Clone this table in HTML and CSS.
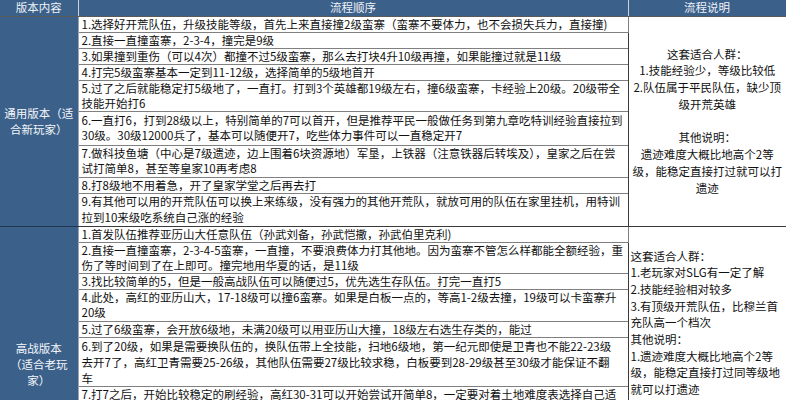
FILE: index.html
```html
<!DOCTYPE html>
<html lang="zh-CN">
<head>
<meta charset="utf-8">
<title>流程表</title>
<link rel="stylesheet" href="styles.css">
</head>
<body>
<table class="sheet">
  <colgroup>
    <col class="c-ver">
    <col class="c-mid">
    <col class="c-note">
  </colgroup>
  <thead>
    <tr class="head">
      <th>版本内容</th>
      <th>流程顺序</th>
      <th>流程说明</th>
    </tr>
  </thead>
  <tbody>
    <tr class="l1 h16">
      <td class="ver ver1" rowspan="9">通用版本（适<br>合新玩家）</td>
      <td class="mid">1.选择好开荒队伍，升级技能等级，首先上来直接撞2级蛮寨（蛮寨不要体力，也不会损失兵力，直接撞)</td>
      <td class="note note1" rowspan="9">这套适合人群：<br>1.技能经验少，等级比较低<br>2.队伍属于平民队伍，缺少顶<br>级开荒英雄<br>&nbsp;<br>其他说明：<br>遗迹难度大概比地高个2等<br>级，能稳定直接打过就可以打<br>遗迹</td>
    </tr>
    <tr class="l1 h16"><td class="mid">2.直接一直撞蛮寨，2-3-4，撞完是9级</td></tr>
    <tr class="l1 h16"><td class="mid">3.如果撞到重伤（可以4次）都撞不过5级蛮寨，那么去打块4升10级再撞，如果能撞过就是11级</td></tr>
    <tr class="l1 h16"><td class="mid">4.打完5级蛮寨基本一定到11-12级，选择简单的5级地首开</td></tr>
    <tr class="l2 h31"><td class="mid">5.过了之后就能稳定打5级地了，一直打。打到3个英雄都19级左右，撞6级蛮寨，卡经验上20级。20级带全<br>技能开始打6</td></tr>
    <tr class="l2 h34"><td class="mid">6.一直打6，打到28级以上，特别简单的7可以首开，但是推荐平民一般做任务到第九章吃特训经验直接拉到<br>30级。30级12000兵了，基本可以随便开7，吃些体力事件可以一直稳定开7</td></tr>
    <tr class="l2 h32"><td class="mid">7.做科技鱼塘（中心是7级遗迹，边上围着6块资源地）军垦，上铁器（注意铁器后转埃及），皇家之后在尝<br>试打简单8，甚至等皇家10再考虑8</td></tr>
    <tr class="l1 h16"><td class="mid">8.打8级地不用着急，开了皇家学堂之后再去打</td></tr>
    <tr class="l2 h33 grp-end"><td class="mid">9.有其他可以用的开荒队伍可以换上来练级，没有强力的其他开荒队，就放可用的队伍在家里挂机，用特训<br>拉到10来级吃系统自己涨的经验</td></tr>

    <tr class="l1 h16">
      <td class="ver ver2" rowspan="7">高战版本<br>（适合老玩<br>家）</td>
      <td class="mid">1.首发队伍推荐亚历山大任意队伍（孙武刘备，孙武恺撒，孙武伯里克利)</td>
      <td class="note note2" rowspan="7">这套适合人群：<br>1.老玩家对SLG有一定了解<br>2.技能经验相对较多<br>3.有顶级开荒队伍，比穆兰首<br>充队高一个档次<br>其他说明：<br>1.遗迹难度大概比地高个2等<br>级，能稳定直接打过同等级地<br>就可以打遗迹<br>2.遗迹有些队伍要30级才可用</td>
    </tr>
    <tr class="l2 h31"><td class="mid">2.直接一直撞蛮寨，2-3-4-5蛮寨，一直撞，不要浪费体力打其他地。因为蛮寨不管怎么样都能全额经验，重<br>伤了等时间到了在上即可。撞完地用华夏的话，是11级</td></tr>
    <tr class="l1 h16"><td class="mid">3.找比较简单的5，但是一般高战队伍可以随便过5，优先选生存队伍。打完一直打5</td></tr>
    <tr class="l2 h32"><td class="mid">4.此处，高红的亚历山大，17-18级可以撞6蛮寨。如果是白板一点的，等高1-2级去撞，19级可以卡蛮寨升<br>20级</td></tr>
    <tr class="l1 h16"><td class="mid">5.过了6级蛮寨，会开放6级地，未满20级可以用亚历山大撞，18级左右选生存类的，能过</td></tr>
    <tr class="l3 h49"><td class="mid">6.到了20级，如果是需要换队伍的，换队伍带上全技能，扫地6级地，第一纪元即使是卫青也不能22-23级<br>去开7了，高红卫青需要25-26级，其他队伍需要27级比较求稳，白板要到28-29级甚至30级才能保证不翻<br>车</td></tr>
    <tr class="l2 h33"><td class="mid">7.打7之后，开始比较稳定的刷经验，高红30-31可以开始尝试开简单8，一定要对着土地难度表选择自己适<br>合的地去打</td></tr>
  </tbody>
</table>
</body>
</html>
```

FILE: styles.css
```css
html, body {
  margin: 0;
  padding: 0;
  background: #ffffff;
}

body {
  font-family: "Noto Sans CJK SC", "Noto Sans", sans-serif;
  font-size: 11.5px;
  color: #111111;
}

.sheet {
  border-collapse: collapse;
  table-layout: fixed;
  width: 786px;
}

.c-ver { width: 78px; }
.c-mid { width: 550px; }
.c-note { width: 158px; }

.sheet th,
.sheet td {
  padding: 0 3px;
  border: 1px solid #808080;
  white-space: nowrap;
  overflow: hidden;
  vertical-align: middle;
}

.head { height: 16px; }

.head th {
  background: #3b608a;
  color: #eef2f7;
  font-weight: normal;
  line-height: 15px;
  text-align: center;
  border-top: none;
  border-left: 1px solid #c9d2dd;
  border-right: 1px solid #c9d2dd;
  border-bottom: 1px solid #5a5a5a;
}

.head th:first-child { border-left: none; }

.h16 { height: 16px; }
.h31 { height: 31px; }
.h32 { height: 32px; }
.h33 { height: 33px; }
.h34 { height: 34px; }
.h49 { height: 49px; }

.l1 td.mid { line-height: 15px; }
.l2 td.mid { line-height: 15.5px; }
.h31 td.mid { line-height: 15px; }
.l3 td.mid { line-height: 16px; }

td.mid {
  text-align: left;
  padding-left: 3px;
}

.grp-end td { border-bottom: 1px solid #3a3a3a; }

td.ver {
  background: #3b608a;
  color: #f3f6f9;
  text-align: center;
  border-left: none;
  border-right: 1px solid #9aa6b4;
  border-bottom: 1px solid #24364d;
  padding: 0;
}

td.ver1 {
  line-height: 16.5px;
}

td.ver2 {
  vertical-align: top;
  line-height: 16px;
  padding-top: 113px;
}

td.note {
  border-left: 1px solid #3a3a3a;
  border-right: none;
  border-bottom: 1px solid #3a3a3a;
}

td.note1 {
  text-align: center;
  line-height: 16.75px;
}

td.note2 {
  text-align: left;
  vertical-align: top;
  line-height: 16.7px;
  padding-top: 21px;
  padding-left: 2px;
}
```
